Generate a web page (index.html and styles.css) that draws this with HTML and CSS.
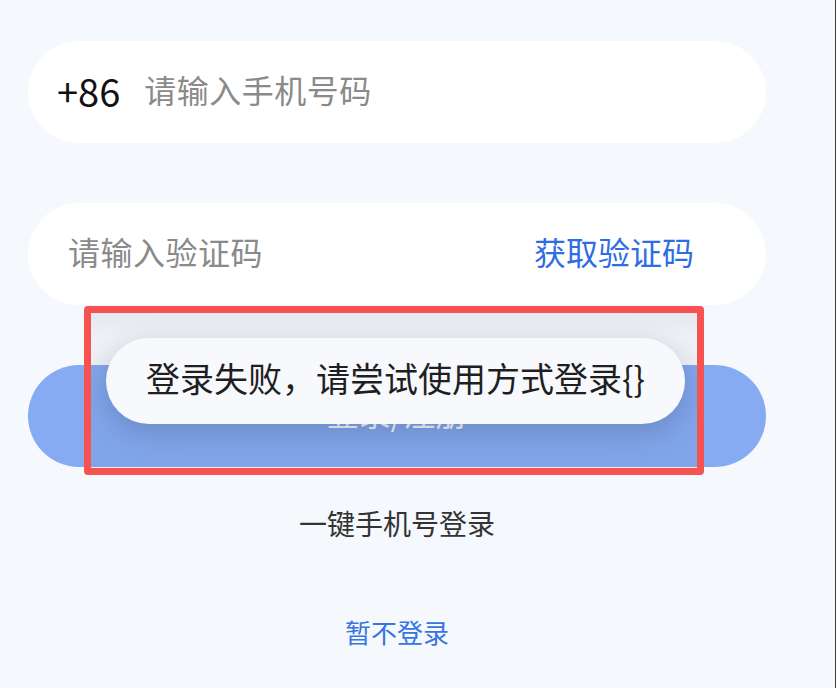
FILE: index.html
```html
<!DOCTYPE html>
<html lang="zh-CN">
<head>
<meta charset="utf-8">
<title>登录</title>
<link rel="stylesheet" href="styles.css">
</head>
<body>
<div class="page">
  <div class="form">
    <div class="field field-phone">
      <span class="prefix">+86</span>
      <span class="placeholder">请输入手机号码</span>
    </div>
    <div class="field field-code">
      <span class="placeholder">请输入验证码</span>
      <span class="get-code">获取验证码</span>
    </div>
    <div class="submit">登录/注册</div>
    <div class="quick">一键手机号登录</div>
    <div class="skip">暂不登录</div>
  </div>
  <div class="annotation">
    <div class="toast">登录失败，请尝试使用方式登录{}</div>
  </div>
</div>
</body>
</html>
```

FILE: styles.css
```css
html, body {
  margin: 0;
  padding: 0;
}

body {
  background: #f5f8fd;
  font-family: "Noto Sans CJK SC", "Noto Sans", sans-serif;
}

.page {
  position: relative;
  width: 836px;
  height: 688px;
  box-sizing: border-box;
  border-right: 1px solid #3c3c3c;
  background: #f5f8fd;
  overflow: hidden;
}

.form {
  display: flex;
  flex-direction: column;
  width: 738px;
  padding: 41px 0 0 28px;
}

.field {
  display: flex;
  align-items: center;
  height: 102px;
  border-radius: 51px;
  background: #ffffff;
  box-sizing: border-box;
  padding-bottom: 7px;
}

.field-phone {
  padding-left: 29px;
}

.field-code {
  margin-top: 60px;
  padding-left: 40px;
  padding-right: 72px;
  justify-content: space-between;
}

.prefix {
  font-size: 38px;
  line-height: 1;
  color: #111111;
  margin-right: 24px;
  position: relative;
  top: 2px;
}

.placeholder {
  font-size: 32px;
  line-height: 1;
  color: #8a8a8a;
  letter-spacing: 0.5px;
}

.get-code {
  font-size: 32px;
  line-height: 1;
  color: #2e6de3;
}

.submit {
  margin-top: 60px;
  height: 102px;
  box-sizing: border-box;
  padding-bottom: 8px;
  border-radius: 51px;
  background: #86abf2;
  color: #ffffff;
  font-size: 32px;
  display: flex;
  align-items: center;
  justify-content: center;
}

.quick {
  margin-top: 39px;
  font-size: 28px;
  line-height: 34px;
  color: #333333;
  text-align: center;
}

.skip {
  margin-top: 76px;
  font-size: 26px;
  line-height: 32px;
  color: #3775e4;
  text-align: center;
}

.annotation {
  position: absolute;
  left: 84px;
  top: 306px;
  width: 620px;
  height: 169px;
  box-sizing: border-box;
  border: 7px solid #f75252;
  border-radius: 4px;
  overflow: hidden;
}

.annotation::before {
  content: "";
  position: absolute;
  inset: 0;
  background: linear-gradient(to bottom,
    rgba(30, 40, 60, 0.075) 0,
    rgba(30, 40, 60, 0.035) 24px,
    rgba(30, 40, 60, 0.05) 100%);
}

.toast {
  position: absolute;
  left: 15px;
  top: 25px;
  width: 579px;
  height: 86px;
  box-sizing: border-box;
  padding-bottom: 8px;
  border-radius: 43px;
  background: #f7f9fd;
  box-shadow: 0 8px 28px rgba(20, 30, 60, 0.2);
  color: #1f1f1f;
  font-size: 34px;
  display: flex;
  align-items: center;
  justify-content: center;
}
```
